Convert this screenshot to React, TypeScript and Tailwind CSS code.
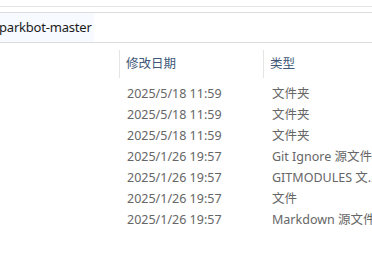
const rows = [
  { date: "2025/5/18 11:59", type: "文件夹" },
  { date: "2025/5/18 11:59", type: "文件夹" },
  { date: "2025/5/18 11:59", type: "文件夹" },
  { date: "2025/1/26 19:57", type: "Git Ignore 源文件" },
  { date: "2025/1/26 19:57", type: "GITMODULES 文..." },
  { date: "2025/1/26 19:57", type: "文件" },
  { date: "2025/1/26 19:57", type: "Markdown 源文件" },
]

const font = { fontFamily: '"Noto Sans", "Noto Sans CJK SC", sans-serif' }

export default function App() {
  return (
    <div className="w-[372px] h-[279px] bg-white overflow-hidden" style={font}>
      <div className="h-[6px]" />
      <div className="h-[6px] border-t border-[#e3e3e3]" />
      <div className="h-[31px] border-t border-b border-[#dcdcdc] flex">
        <div className="w-[94px] bg-[#f7faff] flex items-center">
          <span className="text-[13px] tracking-[-0.2px] text-[#1b1b1b] whitespace-nowrap -ml-[1px] leading-none">
            parkbot-master
          </span>
        </div>
      </div>
      <div className="flex h-[28px] mt-[7px] text-[12.5px] text-[#3f5878]">
        <div className="w-[120px] border-r border-[#e5e5e5]" />
        <div className="w-[144px] border-r border-[#e5e5e5] pl-[6px] flex items-center">
          修改日期
        </div>
        <div className="flex-1 pl-[6px] flex items-center">类型</div>
      </div>
      <div className="mt-[6px] text-[12.5px] text-[#666666]">
        {rows.map((r, i) => (
          <div key={i} className="flex h-[21px] items-center whitespace-nowrap">
            <div className="w-[127px] shrink-0" />
            <div className="w-[145px] shrink-0">{r.date}</div>
            <div className="min-w-0">{r.type}</div>
          </div>
        ))}
      </div>
    </div>
  )
}
